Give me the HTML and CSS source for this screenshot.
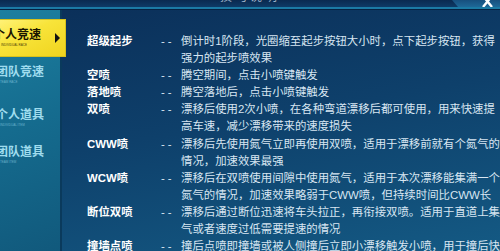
FILE: index.html
```html
<!DOCTYPE html>
<html lang="zh-CN">
<head>
    <meta charset="UTF-8">
    <title>技巧说明</title>
    <link rel="stylesheet" href="styles.css">
</head>
<body>
    <header class="topbar">
        <span class="title">技巧说明</span>
        <div class="close-tab">
            <svg width="12" height="10" viewBox="0 0 12 10"><path d="M1 -4 L10 7 M10 -4 L1 7" stroke="#fff" stroke-width="2.4" fill="none"/></svg>
        </div>
    </header>
    <div class="layout">
        <nav class="sidebar">
            <div class="nav-item active">
                <span class="nav-name">个人竞速</span>
                <span class="nav-sub">INDIVIDUAL RACE</span>
                <span class="arrow"></span>
            </div>
            <div class="nav-item">
                <span class="nav-name">团队竞速</span>
                <span class="nav-sub">TEAM RACE</span>
            </div>
            <div class="nav-item tall">
                <span class="nav-name">个人道具</span>
                <span class="nav-sub">INDIVIDUAL ITEM</span>
            </div>
            <div class="nav-item">
                <span class="nav-name">团队道具</span>
                <span class="nav-sub">TEAM ITEM</span>
            </div>
        </nav>
        <main class="content">
            <div class="skills">
                <span class="label">超级起步</span><span class="dash">--</span>
                <span class="desc">倒计时1阶段，光圈缩至起步按钮大小时，点下起步按钮，获得<br>强力的起步喷效果</span>

                <span class="label">空喷</span><span class="dash">--</span>
                <span class="desc">腾空期间，点击小喷键触发</span>

                <span class="label">落地喷</span><span class="dash">--</span>
                <span class="desc">腾空落地后，点击小喷键触发</span>

                <span class="label">双喷</span><span class="dash">--</span>
                <span class="desc">漂移后使用2次小喷，在各种弯道漂移后都可使用，用来快速提<br>高车速，减少漂移带来的速度损失</span>

                <span class="label">CWW喷</span><span class="dash">--</span>
                <span class="desc">漂移后先使用氮气立即再使用双喷，适用于漂移前就有个氮气的<br>情况，加速效果最强</span>

                <span class="label">WCW喷</span><span class="dash">--</span>
                <span class="desc">漂移后在双喷使用间隙中使用氮气，适用于本次漂移能集满一个<br>氮气的情况，加速效果略弱于CWW喷，但持续时间比CWW长</span>

                <span class="label">断位双喷</span><span class="dash">--</span>
                <span class="desc">漂移后通过断位迅速将车头拉正，再衔接双喷。适用于直道上集<br>气或者速度过低需要提速的情况</span>

                <span class="label">撞墙点喷</span><span class="dash">--</span>
                <span class="desc">撞后点喷即撞墙或被人侧撞后立即小漂移触发小喷，用于撞后快</span>
            </div>
        </main>
    </div>
</body>
</html>
```

FILE: styles.css
```css
body {
    margin: 0;
    width: 500px;
    height: 251px;
    overflow: hidden;
    background-color: #0b2f57;
    font-family: "Liberation Sans", "Noto Sans CJK SC", sans-serif;
}

.topbar {
    height: 7px;
    display: flex;
    justify-content: center;
    position: relative;
    background: linear-gradient(to bottom, #0a2a50, #0e3a66);
    border-bottom: 2px solid #1b7aa4;
    box-shadow: 0 1px 0 #062242;
    overflow: hidden;
}

.title {
    margin-top: -10px;
    font-size: 12px;
    line-height: 14px;
    color: #9fb3c9;
    letter-spacing: 3px;
}

.close-tab {
    position: absolute;
    top: 0;
    right: 0;
    width: 48px;
    height: 7px;
    background: linear-gradient(to bottom, #17507e, #1e6898);
    clip-path: polygon(0 0, 100% 0, 100% 100%, 6px 100%);
    display: flex;
    justify-content: flex-end;
    padding-right: 6px;
    box-sizing: border-box;
}

.layout {
    display: flex;
    height: 242px;
    margin-top: 1px;
}

.sidebar {
    width: 60px;
    flex-shrink: 0;
    padding-top: 9px;
    display: flex;
    flex-direction: column;
    background: linear-gradient(160deg, #1d7f9f 0%, #156c8f 45%, #11597c 100%);
    border-right: 2px solid #0a3a5c;
    position: relative;
    z-index: 1;
}

.nav-item {
    height: 39px;
    display: flex;
    flex-direction: column;
    padding-top: 8px;
    box-sizing: border-box;
    margin-left: -4px;
    color: #9fdcee;
}

.nav-item.tall {
    height: 41px;
    padding-top: 12px;
}

.nav-name {
    font-size: 12px;
    font-weight: bold;
    line-height: 15px;
    white-space: nowrap;
}

.nav-sub {
    font-size: 3px;
    line-height: 5px;
    margin-left: 4px;
    opacity: 0.6;
    white-space: nowrap;
}

.nav-item.active {
    width: 70px;
    height: 38px;
    margin-left: -4px;
    color: #1a1500;
    background: linear-gradient(155deg, #fff27a 0%, #f8e43a 40%, #f0d41e 100%);
    border: 1px solid #d9c21a;
    position: relative;
}

.nav-item.active .nav-name {
    margin-left: -4px;
}

.nav-item.active .nav-sub {
    opacity: 0.8;
}

.arrow {
    position: absolute;
    right: 5px;
    top: 13px;
    width: 0;
    height: 0;
    border-top: 5px solid transparent;
    border-bottom: 5px solid transparent;
    border-left: 5px solid #111;
}

.content {
    flex: 1;
    background: linear-gradient(170deg, #0b305a 0%, #0e406b 45%, #145a84 100%);
    padding: 23px 0 0 25px;
    overflow: hidden;
}

.skills {
    display: grid;
    grid-template-columns: 74px 20px auto;
    font-size: 11.4px;
    line-height: 17.1px;
    white-space: nowrap;
}

.label {
    color: #ffffff;
    font-weight: bold;
}

.dash {
    color: #d8e6f2;
    letter-spacing: 3px;
}

.desc {
    color: #d8e6f2;
}
```
